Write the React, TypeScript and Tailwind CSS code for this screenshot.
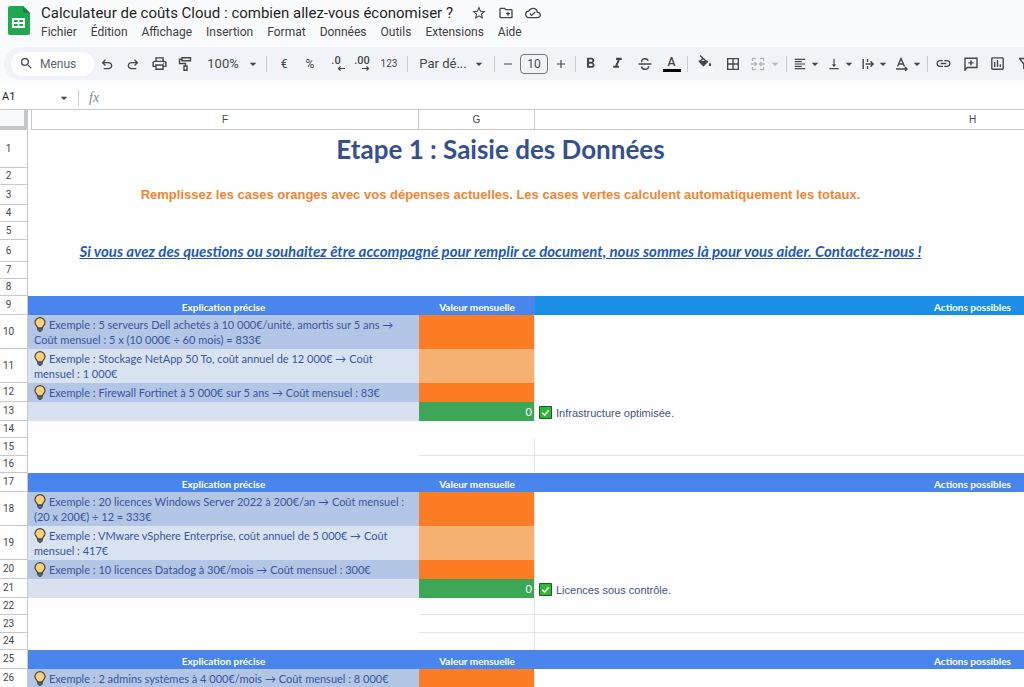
import React, { useState } from 'react';
import clsx from 'clsx';
import {
  MdAdd,
  MdArrowDropDown,
  MdBorderAll,
  MdFormatAlignLeft,
  MdFormatBold,
  MdFormatItalic,
  MdLink,
  MdOutlineCloudDone,
  MdOutlineCreateNewFolder,
  MdOutlineFilterAlt,
  MdOutlineInsertChart,
  MdOutlinePrint,
  MdRemove,
  MdSearch,
  MdStarBorder,
  MdVerticalAlignBottom
} from 'react-icons/md';

const menus = ['Fichier', 'Édition', 'Affichage', 'Insertion', 'Format', 'Données', 'Outils', 'Extensions', 'Aide'];

type Row = {
  height: string;
  kind: 'title' | 'hint' | 'link' | 'blank' | 'grid' | 'header' | 'example' | 'total';
  text?: string;
  alt?: boolean;
  accent?: boolean;
  noLine?: boolean;
};

const rows: Row[] = [
  { height: 'h-[38px]', kind: 'title', text: 'Etape 1 : Saisie des Données' },
  { height: 'h-[17px]', kind: 'blank' },
  {
    height: 'h-[20px]',
    kind: 'hint',
    text: 'Remplissez les cases oranges avec vos dépenses actuelles. Les cases vertes calculent automatiquement les totaux.'
  },
  { height: 'h-[17px]', kind: 'blank' },
  { height: 'h-[18px]', kind: 'blank' },
  {
    height: 'h-[22px]',
    kind: 'link',
    text: 'Si vous avez des questions ou souhaitez être accompagné pour remplir ce document, nous sommes là pour vous aider. Contactez-nous !'
  },
  { height: 'h-[17px]', kind: 'blank' },
  { height: 'h-[17px]', kind: 'blank' },
  { height: 'h-[19px]', kind: 'header', accent: true },
  {
    height: 'h-[34px]',
    kind: 'example',
    text: 'Exemple : 5 serveurs Dell achetés à 10\u00a0000€/unité, amortis sur 5 ans → Coût mensuel : 5 x (10\u00a0000€ ÷ 60 mois) = 833€'
  },
  { height: 'h-[34px]', kind: 'example', alt: true, text: 'Exemple : Stockage NetApp 50 To, coût annuel de 12\u00a0000€ → Coût mensuel : 1\u00a0000€' },
  { height: 'h-[19px]', kind: 'example', text: 'Exemple : Firewall Fortinet à 5\u00a0000€ sur 5 ans → Coût mensuel : 83€' },
  { height: 'h-[19px]', kind: 'total', text: 'Infrastructure optimisée.' },
  { height: 'h-[17px]', kind: 'blank' },
  { height: 'h-[18px]', kind: 'grid' },
  { height: 'h-[17px]', kind: 'grid', noLine: true },
  { height: 'h-[19px]', kind: 'header' },
  {
    height: 'h-[34px]',
    kind: 'example',
    text: 'Exemple : 20 licences Windows Server 2022 à 200€/an → Coût mensuel : (20 x 200€) ÷ 12 = 333€'
  },
  { height: 'h-[34px]', kind: 'example', alt: true, text: 'Exemple : VMware vSphere Enterprise, coût annuel de 5\u00a0000€ → Coût mensuel : 417€' },
  { height: 'h-[19px]', kind: 'example', text: 'Exemple : 10 licences Datadog à 30€/mois → Coût mensuel : 300€' },
  { height: 'h-[19px]', kind: 'total', text: 'Licences sous contrôle.' },
  { height: 'h-[17px]', kind: 'grid' },
  { height: 'h-[18px]', kind: 'grid' },
  { height: 'h-[17px]', kind: 'grid', noLine: true },
  { height: 'h-[19px]', kind: 'header' },
  { height: 'h-[19px]', kind: 'example', text: 'Exemple : 2 admins systèmes à 4\u00a0000€/mois → Coût mensuel : 8\u00a0000€' }
];

function SheetsLogo() {
  return (
    <svg viewBox="0 0 22 29" className="w-[22px] h-[29px] shrink-0" aria-hidden="true">
      <path d="M2 0h13l7 7v20a2 2 0 0 1-2 2H2a2 2 0 0 1-2-2V2a2 2 0 0 1 2-2z" fill="#21a652" />
      <path d="M15 0l7 7h-5a2 2 0 0 1-2-2z" fill="#16833c" />
      <path d="M4 12h13v10H4z" fill="#fff" />
      <path d="M6 14h3.700v1.900H6zM11.300 14H15v1.900h-3.700zM6 17.900h3.700v2H6zM11.300 17.900H15v2h-3.700z" fill="#21a652" />
    </svg>
  );
}

function UndoIcon({ flip = false }: { flip?: boolean }) {
  return (
    <svg viewBox="0 0 24 24" className={clsx('size-4', flip && '-scale-x-100')} fill="currentColor">
      <path d="M7 20v-2h7.100q1.575 0 2.737-1T18 14.500T16.838 12T14.100 11H7.800l2.600 2.600L9 15L4 10l5-5l1.400 1.400L7.800 9h6.300q2.425 0 4.163 1.575T20 14.500t-1.737 3.925T14.100 20z" />
    </svg>
  );
}

function RollerIcon() {
  return (
    <svg viewBox="0 0 16 16" className="size-4" fill="none" stroke="currentColor" strokeWidth="1.4">
      <path d="M5 1.700h8.500v3H5zM5 3.200H2.500v4.300h6V10M7 10h3v4.300H7z" />
    </svg>
  );
}

function StrikeIcon() {
  return (
    <svg viewBox="0 0 16 16" className="size-4" fill="none" stroke="currentColor" strokeWidth="1.500">
      <path d="M1.500 8h13M4.800 6C4.300 3.700 6 2.700 8 2.700c1.600 0 2.700.7 3.200 2M4.500 10.500c.4 1.800 1.700 2.800 3.600 2.800c2.200 0 3.800-1.200 3.400-3.200" />
    </svg>
  );
}

function MergeIcon() {
  return (
    <svg viewBox="0 0 14 14" className="size-3.5" fill="none" stroke="currentColor" strokeWidth="1.4">
      <path d="M5 1.500H1.500V4M9 1.500h3.500V4M5 12.500H1.500V10M9 12.500h3.500V10M0 7h5M14 7H9M3.500 5L5.500 7l-2 2M10.500 5L8.500 7l2 2" />
    </svg>
  );
}

function OverflowIcon() {
  return (
    <svg viewBox="0 0 14 14" className="size-3.5" fill="none" stroke="currentColor" strokeWidth="1.4">
      <path d="M2.200 2v10M6.500 2v3M6.500 9v3M4.500 7h7.500M9.500 4.300L12.200 7L9.500 9.700" />
    </svg>
  );
}

function RotationIcon() {
  return (
    <svg viewBox="0 0 14 14" className="size-3.5" fill="none" stroke="currentColor" strokeWidth="1.4">
      <path d="M2.500 9.500L6 1.500L9.500 9.500M3.800 7h4.400M1 12h11M10 10l2 2l-2 2" />
    </svg>
  );
}

function FillIcon() {
  return (
    <svg viewBox="0 0 16 12" className="w-4 h-3" fill="none" stroke="currentColor" strokeWidth="1.4">
      <path d="M3 .5L10 7L6.500 10.500L2.500 6.500L6.500 3" />
      <path d="M3 6.500h7L6.500 10.200z" fill="currentColor" />
      <path d="M13 7.500c-2.200 3-.8 3.600 0 3.600s2.200-.6 0-3.600z" fill="currentColor" stroke="none" />
    </svg>
  );
}

function CommentIcon() {
  return (
    <svg viewBox="0 0 14 14" className="size-3.5" fill="none" stroke="currentColor" strokeWidth="1.4">
      <path d="M1 13V1.200h12v9.300H3.300zM7 3.300v5.200M4.400 5.900h5.200" />
    </svg>
  );
}

function DecimalIcon({ label, more = false }: { label: string; more?: boolean }) {
  return (
    <span className="flex flex-col items-center text-[11px] leading-[10px] font-medium">
      {label}
      <svg viewBox="0 0 8 5" className={clsx('w-2 h-[5px] self-end', more ? '-scale-x-100' : '-mr-1')} fill="none" stroke="currentColor" strokeWidth="1.2">
        <path d="M8 2.500H1.500M3.500 .5l-2 2l2 2" />
      </svg>
    </span>
  );
}

function Bulb() {
  return (
    <svg viewBox="0 0 12 15" className="inline-block w-3 h-[15px] mr-[3px] align-[-3px]" role="img" aria-label="Ampoule">
      <path d="M6 .7a5 5 0 0 0-5 5c0 2.300 2.300 3.300 2.700 5.300h4.600C8.700 9 11 8 11 5.700a5 5 0 0 0-5-5z" fill="#fbd27a" stroke="#4a3f35" strokeWidth="1.200" />
      <path d="M3.700 11h4.600v2L7 14.500H5L3.700 13z" fill="#59636e" stroke="#333" strokeWidth=".7" />
    </svg>
  );
}

function CheckMark() {
  return (
    <svg viewBox="0 0 13 13" className="size-[13px] shrink-0" role="img" aria-label="Validé">
      <path d="M.5.500h12v12H.5z" fill="#2eb637" stroke="#1d5c22" />
      <path d="M3.300 6.700l2.300 2.500l4.200-5" fill="none" stroke="#fff" strokeWidth="1.500" />
    </svg>
  );
}

interface ToolProps {
  label: string;
  className?: string;
  dropdown?: boolean;
  children: React.ReactNode;
}

function Tool({ label, className = 'w-[26px]', dropdown = false, children }: ToolProps) {
  return (
    <button type="button" aria-label={label} title={label} className={clsx('h-6 shrink-0 flex items-center justify-center', className)}>
      {children}
      {dropdown && <MdArrowDropDown size={16} className="shrink-0" />}
    </button>
  );
}

function Separator({ className = 'mx-1' }: { className?: string }) {
  return <span className={clsx('w-px h-4 shrink-0 bg-[#c7cacf]', className)} />;
}

function Toolbar() {
  const [fontSize, setFontSize] = useState(10);

  return (
    <div className="ml-1 h-[33px] pl-[7px] flex items-center bg-[#f0f4f9] rounded-l-full text-[#444746] text-xs overflow-hidden">
      <label className="w-[83px] h-6 pl-2 shrink-0 flex items-center gap-1.5 bg-white rounded-full">
        <MdSearch size={15} className="shrink-0" />
        <input type="text" placeholder="Menus" aria-label="Menus" className="w-12 outline-none placeholder:text-[#5f6368]" />
      </label>
      <Tool label="Annuler"><UndoIcon /></Tool>
      <Tool label="Rétablir"><UndoIcon flip /></Tool>
      <Tool label="Imprimer"><MdOutlinePrint size={17} /></Tool>
      <Tool label="Copier la mise en forme"><RollerIcon /></Tool>
      <Tool label="Zoom" className="w-16 pl-2 gap-1.5 text-[13px]" dropdown>100%</Tool>
      <Separator />
      <Tool label="Format monétaire">€</Tool>
      <Tool label="Pourcentage">%</Tool>
      <Tool label="Réduire le nombre de décimales"><DecimalIcon label=".0" /></Tool>
      <Tool label="Augmenter le nombre de décimales"><DecimalIcon label=".00" more /></Tool>
      <Tool label="Autres formats" className="w-7 text-[10px]">123</Tool>
      <Separator />
      <Tool label="Police" className="w-[78px] pl-1 gap-1 text-[13px]" dropdown>Par dé...</Tool>
      <Separator />
      <button type="button" aria-label="Réduire la taille" className="w-[18px] shrink-0 flex justify-center" onClick={() => setFontSize(fontSize - 1)}>
        <MdRemove size={14} />
      </button>
      <input
        type="text"
        aria-label="Taille de la police"
        value={fontSize}
        onChange={(e) => setFontSize(Number(e.target.value) || 0)}
        className="w-7 h-5 mx-[3px] shrink-0 border border-[#747775] rounded text-center"
      />
      <button type="button" aria-label="Augmenter la taille" className="w-5 shrink-0 flex justify-center" onClick={() => setFontSize(fontSize + 1)}>
        <MdAdd size={14} />
      </button>
      <Separator className="ml-1 mr-px" />
      <Tool label="Gras" className="w-[27px]"><MdFormatBold size={17} /></Tool>
      <Tool label="Italique" className="w-[27px]"><MdFormatItalic size={17} /></Tool>
      <Tool label="Barré" className="w-[27px]"><StrikeIcon /></Tool>
      <Tool label="Couleur du texte" className="w-[27px]">
        <span className="w-[18px] border-b-[3px] border-black text-xs leading-[14px] font-medium">A</span>
      </Tool>
      <Separator className="ml-0.5 mr-[3px]" />
      <Tool label="Couleur de remplissage" className="w-7">
        <span className="w-[18px] pb-0.5 flex justify-center border-b-[3px] border-white"><FillIcon /></span>
      </Tool>
      <Tool label="Bordures" className="w-7"><MdBorderAll size={16} /></Tool>
      <Tool label="Fusionner les cellules" className="w-9 pl-1 gap-0.5 text-[#b4b7ba]" dropdown><MergeIcon /></Tool>
      <Separator className="ml-[3px] mr-0.5" />
      <Tool label="Alignement horizontal" className="w-[34px] pl-1" dropdown><MdFormatAlignLeft size={16} /></Tool>
      <Tool label="Alignement vertical" className="w-[34px] pl-1" dropdown><MdVerticalAlignBottom size={16} /></Tool>
      <Tool label="Retour à la ligne" className="w-[34px] pl-1" dropdown><OverflowIcon /></Tool>
      <Tool label="Rotation du texte" className="w-[34px] pl-1" dropdown><RotationIcon /></Tool>
      <Separator className="ml-0.5 mr-0.5" />
      <Tool label="Insérer un lien" className="w-[27px]"><MdLink size={17} /></Tool>
      <Tool label="Insérer un commentaire" className="w-[27px]"><CommentIcon /></Tool>
      <Tool label="Insérer un graphique" className="w-[27px]"><MdOutlineInsertChart size={17} /></Tool>
      <Tool label="Créer un filtre" className="w-[27px]"><MdOutlineFilterAlt size={17} /></Tool>
    </div>
  );
}

function RowCells({ row }: { row: Row }) {
  // Merged rows are centred over the columns up to the middle of H
  const merged = 'pr-[437px] text-center whitespace-nowrap';

  switch (row.kind) {
    case 'title':
      return (
        <td colSpan={3} className={merged}>
          <h1 className="font-[Lato,sans-serif] font-bold text-[26px] leading-[34px] text-[#34508f]">{row.text}</h1>
        </td>
      );
    case 'hint':
      return <td colSpan={3} className={clsx(merged, 'font-bold text-[13px] leading-[18px] text-[#f08432]')}>{row.text}</td>;
    case 'link':
      return (
        <td colSpan={3} className={clsx(merged, 'font-[Lato,sans-serif] font-bold italic text-[15px] leading-5 text-[#1f59b5]')}>
          <a href="#contact" className="underline">{row.text}</a>
        </td>
      );
    case 'header':
      return (
        <>
          <td className="bg-[#4885ed] pb-px align-bottom text-center">Explication précise</td>
          <td className="bg-[#4885ed] pb-px align-bottom text-center">Valeur mensuelle</td>
          <td className={clsx('pb-px align-bottom text-center', row.accent ? 'bg-[#1b8fe6]' : 'bg-[#4885ed]')}>Actions possibles</td>
        </>
      );
    case 'example':
      return (
        <>
          <td className={clsx('px-1.5 pb-0.5 align-bottom font-[Lato,sans-serif] text-[11px] leading-[15px] text-[#3a54a0]', row.alt ? 'bg-[#d9e2f1]' : 'bg-[#b4c6e5]')}>
            <Bulb />
            {row.text}
          </td>
          <td className={clsx('border-r border-[#e1e3e6]', row.alt ? 'bg-[#f4b172]' : 'bg-[#fb7c23]')} />
          <td />
        </>
      );
    case 'total':
      return (
        <>
          <td className="bg-[#d9e1f1]" />
          <td className="bg-[#3da758] border-r border-[#e1e3e6] pr-0.5 text-right font-[Lato,sans-serif] text-[11px] leading-[15px] text-white">0</td>
          <td className="pl-1 pt-0.5">
            <span className="flex items-center gap-1 text-[#3b5490] text-[11px] leading-[14px]">
              <CheckMark />
              {row.text}
            </span>
          </td>
        </>
      );
    case 'grid':
      return (
        <>
          <td />
          <td className={clsx('border-r border-[#e1e3e6]', !row.noLine && 'border-b')} />
          <td className={clsx('border-[#e1e3e6]', !row.noLine && 'border-b')} />
        </>
      );
    default:
      return <td colSpan={3} />;
  }
}

function Sheet() {
  return (
    <div className="overflow-hidden">
      <table className="table-fixed w-[1410px] border-separate border-spacing-0 bg-white">
        <colgroup>
          <col className="w-7" />
          <col className="w-[391px]" />
          <col className="w-[116px]" />
          <col className="w-[875px]" />
        </colgroup>
        <thead>
          <tr className="h-5 text-[10px] leading-[14px] text-[#444746]">
            <th className="bg-[#f8f9fa] border-r-4 border-b-4 border-[#c4c7c5]" aria-label="Tout sélectionner" />
            <th className="pl-[3px] font-normal">
              <div className="h-5 border-l border-b border-r border-[#c7c9cb] flex items-center justify-center">F</div>
            </th>
            <th className="font-normal border-b border-r border-[#c7c9cb]">G</th>
            <th className="font-normal border-b border-[#c7c9cb]">H</th>
          </tr>
        </thead>
        <tbody>
          {rows.map((row, index) => (
            <tr
              key={index}
              className={clsx(row.height, row.kind === 'header' && 'font-[Lato,sans-serif] font-bold text-[10px] leading-[14px] text-white')}
            >
              <th scope="row" className="pr-2.5 border-r border-b border-[#c7c9cb] font-[Roboto,sans-serif] font-normal text-[10px] leading-[14px] text-[#444746]">
                {index + 1}
              </th>
              <RowCells row={row} />
            </tr>
          ))}
        </tbody>
      </table>
    </div>
  );
}

export default function App() {
  return (
    <div className="min-h-screen overflow-hidden bg-[#f9fbfd] font-['Liberation_Sans',Arial,sans-serif]">
      <div className="font-[Roboto,sans-serif]">
        <header className="h-[47px] pl-2 flex items-start gap-[11px]">
          <div className="pt-1.5"><SheetsLogo /></div>
          <div className="pt-[3px]">
            <div className="h-5 flex items-center gap-4 text-[#1f1f1f]">
              <h2 className="text-[15px] leading-5 whitespace-nowrap">Calculateur de coûts Cloud : combien allez-vous économiser ?</h2>
              <span className="pl-0.5 flex items-center gap-[11px] text-[#444746]">
                <button type="button" aria-label="Suivre"><MdStarBorder size={16} /></button>
                <button type="button" aria-label="Déplacer"><MdOutlineCreateNewFolder size={16} /></button>
                <button type="button" aria-label="État du document"><MdOutlineCloudDone size={16} /></button>
              </span>
            </div>
            <nav className="h-[17px] flex items-center gap-3.5 text-xs text-[#3c4043]">
              {menus.map((menu) => (
                <button type="button" key={menu}>{menu}</button>
              ))}
            </nav>
          </div>
        </header>

        <Toolbar />

        {/* Name box and formula bar */}
        <div className="mt-1.5 h-6 flex items-center bg-white border-b border-[#c7c9cb] text-[#444746]">
          <input type="text" aria-label="Zone de nom" defaultValue="A1" className="w-14 pl-0.5 text-[11px] text-[#1f1f1f] outline-none" />
          <button type="button" aria-label="Plages nommées"><MdArrowDropDown size={16} /></button>
          <Separator className="ml-1.5 mr-2.5" />
          <label htmlFor="formula" className="font-['Liberation_Serif',serif] italic text-sm text-[#80868b]">fx</label>
          <input id="formula" type="text" className="flex-1 ml-2 text-xs outline-none" />
        </div>
      </div>

      <Sheet />
    </div>
  );
}
